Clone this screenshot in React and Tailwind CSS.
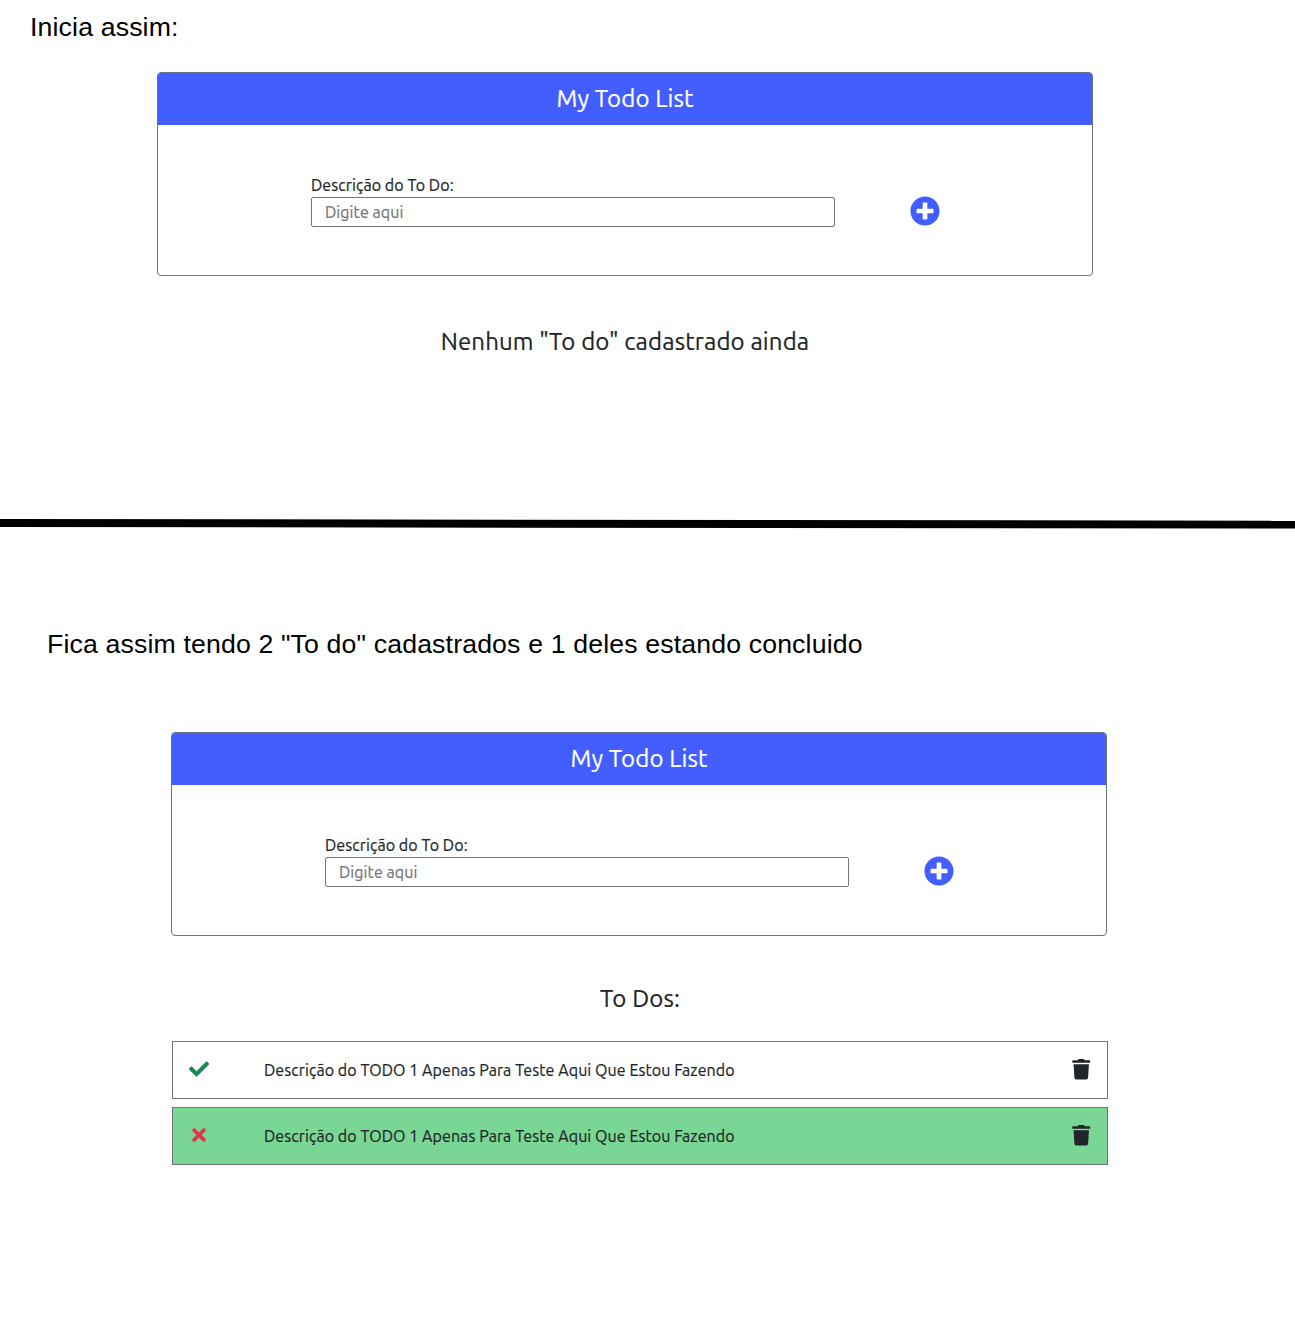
import React from "react";
import { FaPlusCircle, FaCheck, FaTimes, FaTrash } from "react-icons/fa";

function TodoCard() {
  return (
    <section className="h-[204px] w-[936px] overflow-hidden rounded-[4px] border border-[#6c757d] bg-white">
      <header className="flex h-[52px] items-center justify-center bg-[#435eff] text-2xl leading-9 tracking-[0.13px] text-white">
        <h1 className="whitespace-nowrap">My Todo List</h1>
      </header>
      <form className="flex items-end pt-12 pl-[153px]">
        <label className="block w-[524px] text-base leading-6 tracking-[0.075px] text-[#212529]">
          Descrição do To Do:
          <input
            type="text"
            placeholder="Digite aqui"
            className="block h-[30px] w-full rounded-[2px] border border-[#767676] bg-white px-[13px] text-base tracking-[0.075px] placeholder:text-[#757575]"
          />
        </label>
        <button type="button" aria-label="Adicionar" className="mb-px ml-[74.5px] text-[#435eff]">
          <FaPlusCircle size={30} />
        </button>
      </form>
    </section>
  );
}

function TodoItem({ done }) {
  return (
    <li
      className={`flex h-[58px] items-center border border-[#6c757d] ${
        done ? "bg-[#7ad694]" : "bg-white"
      }`}
    >
      <span className="mb-0.5 ml-4 flex w-5 justify-center">
        {done ? <FaTimes size={20} className="text-[#dc3545]" /> : <FaCheck size={20} className="text-[#198754]" />}
      </span>
      <span className="ml-[55px] text-base leading-6 tracking-[0.075px] whitespace-nowrap">
        Descrição do TODO 1 Apenas Para Teste Aqui Que Estou Fazendo
      </span>
      <FaTrash size={20.5} className="mr-4 mb-px ml-auto" />
    </li>
  );
}

export default function App() {
  return (
    <main className="h-[1328px] w-[1295px] overflow-hidden bg-white font-['Ubuntu','Noto_Sans',sans-serif] text-[#212529] [-webkit-text-stroke-width:0.2px]">
      <div className="h-[519px]">
        <p className="h-[72px] pt-[11px] pl-[30px] font-['Liberation_Sans',sans-serif] text-[26.67px] leading-8 tracking-[0.15px] text-black [-webkit-text-stroke-width:0]">
          Inicia assim:
        </p>
        <div className="ml-[157px] w-[936px]">
          <TodoCard />
          <p className="mt-12 text-center text-2xl leading-9 tracking-[0.13px]">
            Nenhum "To do" cadastrado ainda
          </p>
        </div>
      </div>
      <svg className="block" width="1295" height="10" viewBox="0 0 1295 10">
        <path d="M0 0L1295 1.7V9.6L0 8Z" />
      </svg>
      <p className="h-[203px] pt-[99px] pl-[47px] font-['Liberation_Sans',sans-serif] text-[26.67px] leading-8 tracking-[0.15px] text-black [-webkit-text-stroke-width:0]">
        Fica assim tendo 2 "To do" cadastrados e 1 deles estando concluido
      </p>
      <div className="ml-[171px] w-[936px]">
        <TodoCard />
        <h2 className="mt-[45px] pl-[2px] text-center text-2xl leading-9 tracking-[0.13px]">To Dos:</h2>
        <ul className="mt-6 ml-px flex w-[936px] flex-col gap-2">
          <TodoItem />
          <TodoItem done />
        </ul>
      </div>
    </main>
  );
}
